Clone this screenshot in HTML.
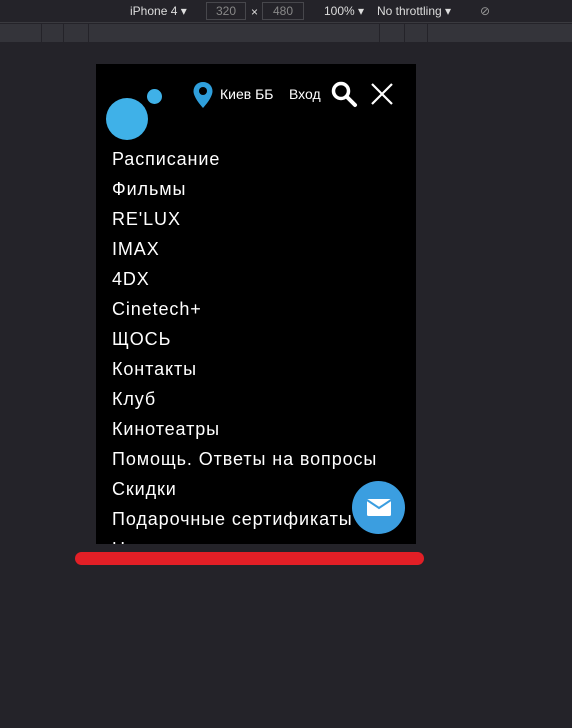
<!DOCTYPE html>
<html><head><meta charset="utf-8"><style>
*{margin:0;padding:0;box-sizing:border-box}
body{width:572px;height:728px;background:#242329;position:relative;overflow:hidden;font-family:"Liberation Sans","DejaVu Sans",sans-serif}
.top{position:absolute;left:0;top:0;width:572px;height:23px;background:#242329;border-bottom:1px solid #3a3a3f;color:#ddd;font-size:12px}
.top span{position:absolute;top:4px}
.box{position:absolute;top:2px;height:18px;border:1px solid #47474c;color:#888;text-align:center;line-height:16px;font-size:12px}
.strip{position:absolute;left:0;top:24px;width:572px;height:18px;background:#34343a}
.strip i{position:absolute;top:0;width:1px;height:18px;background:#242329}
.phone{position:absolute;left:96px;top:64px;width:320px;height:480px;background:#000;overflow:hidden;color:#fff}
.item{position:absolute;left:16px;font-size:18px;line-height:20px;letter-spacing:0.9px;white-space:nowrap}
.red{position:absolute;left:75px;top:552px;width:349px;height:13px;border-radius:7px;background:#e21f26}
</style></head><body>
<div class="top">
<span style="left:130px">iPhone 4 ▾</span>
<div class="box" style="left:206px;width:40px">320</div>
<span style="left:251px;top:5px">×</span>
<div class="box" style="left:262px;width:42px">480</div>
<span style="left:324px">100% ▾</span>
<span style="left:377px">No throttling ▾</span>
<span style="left:480px;color:#999">⊘</span>
</div>
<div class="strip"><i style="left:41px"></i><i style="left:63px"></i><i style="left:88px"></i><i style="left:379px"></i><i style="left:404px"></i><i style="left:427px"></i></div>
<div class="phone">
<div style="position:absolute;left:10px;top:34px;width:42px;height:42px;border-radius:50%;background:#3fb1e8"></div>
<div style="position:absolute;left:51px;top:25px;width:15px;height:15px;border-radius:50%;background:#3fb1e8"></div>
<svg style="position:absolute;left:96px;top:17px" width="22" height="28" viewBox="0 0 22 28"><path d="M11 1C5.5 1 1.5 5 1.5 10.3 1.5 17 11 27 11 27S20.5 17 20.5 10.3C20.5 5 16.5 1 11 1Z" fill="#2f9fdc"/><circle cx="11" cy="10" r="4" fill="#000"/></svg>
<div style="position:absolute;left:124px;top:22px;font-size:14px">Киев ББ</div>
<div style="position:absolute;left:193px;top:22px;font-size:14px">Вход</div>
<svg style="position:absolute;left:234px;top:16px" width="28" height="28" viewBox="0 0 28 28"><circle cx="11" cy="11" r="7.5" stroke="#fff" stroke-width="3.5" fill="none"/><path d="M16.5 16.5L25 25" stroke="#fff" stroke-width="4" stroke-linecap="round"/></svg>
<svg style="position:absolute;left:274px;top:18px" width="24" height="24" viewBox="0 0 24 24"><path d="M2 2L22 22M22 2L2 22" stroke="#fff" stroke-width="2.2"/></svg>
<div class="item" style="top:85px">Расписание</div>
<div class="item" style="top:115px">Фильмы</div>
<div class="item" style="top:145px">RE'LUX</div>
<div class="item" style="top:175px">IMAX</div>
<div class="item" style="top:205px">4DX</div>
<div class="item" style="top:235px">Cinetech+</div>
<div class="item" style="top:265px">ЩОСЬ</div>
<div class="item" style="top:295px">Контакты</div>
<div class="item" style="top:325px">Клуб</div>
<div class="item" style="top:355px">Кинотеатры</div>
<div class="item" style="top:385px">Помощь. Ответы на вопросы</div>
<div class="item" style="top:415px">Скидки</div>
<div class="item" style="top:445px">Подарочные сертификаты</div>
<div class="item" style="top:475px">Новости</div>
<div style="position:absolute;left:256px;top:417px;width:53px;height:53px;border-radius:50%;background:#3b9ee0"></div>
<svg style="position:absolute;left:271px;top:435px" width="24" height="17" viewBox="0 0 24 17"><rect x="0" y="0" width="24" height="17" rx="1.5" fill="#fff"/><path d="M0 1L12 9 24 1" stroke="#3b9ee0" stroke-width="2" fill="none"/></svg>
</div>
<div class="red"></div>
</body></html>
